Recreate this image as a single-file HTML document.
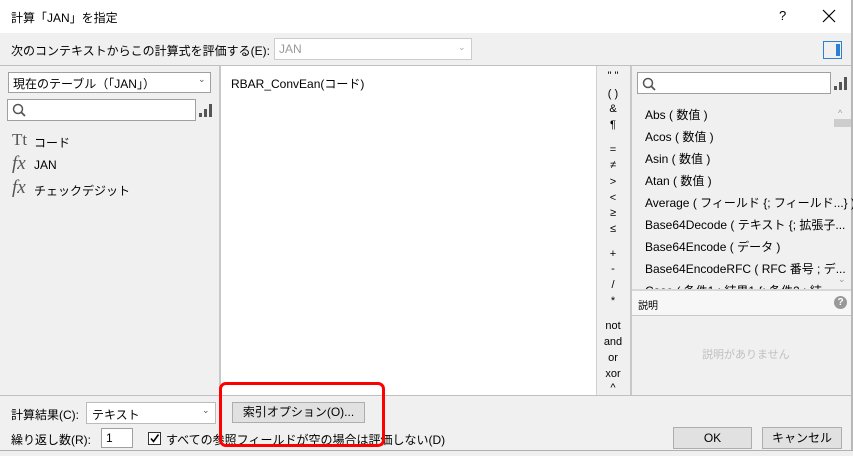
<html><head><style>
body{margin:0;width:853px;height:455px;overflow:hidden;background:#f0f0f0;font-family:"Liberation Sans","Noto Sans CJK JP",sans-serif;font-size:12px;color:#000;position:relative}
.a{position:absolute;white-space:nowrap}
.box{position:absolute;background:#fff;border:1px solid #a0a0a0;box-sizing:border-box}
.btn{position:absolute;background:#e1e1e1;border:1px solid #adadad;box-sizing:border-box;text-align:center;white-space:nowrap}
.op{position:absolute;left:596px;width:34px;text-align:center;font-size:11px}
.fn{position:absolute;left:645px;font-size:12px;white-space:nowrap}
</style></head><body>
<div class="a" style="left:0;top:0;width:851px;height:33px;background:#fff"></div>
<div class="a" style="left:11px;top:9px;font-size:12px">計算「JAN」を指定</div>
<div class="a" style="left:779px;top:8px;font-size:13px">?</div>
<svg class="a" style="left:822px;top:9px" width="14" height="14"><path d="M1 1L13 13M13 1L1 13" stroke="#000" stroke-width="1.2"/></svg>
<div class="a" style="left:851px;top:0;width:2px;height:455px;background:#b8b8b8"></div>
<div class="a" style="left:11px;top:42px">次のコンテキストからこの計算式を評価する(E):</div>
<div class="box" style="left:274px;top:38px;width:198px;height:22px;border-color:#ccc"></div>
<div class="a" style="left:279px;top:42px;color:#999">JAN</div>
<div class="a" style="left:458px;top:42px;color:#aaa;font-size:9px">⌄</div>
<div class="a" style="left:823px;top:41px;width:19px;height:18px;border:1px solid #2b7fd4;box-sizing:border-box"></div>
<div class="a" style="left:836px;top:44px;width:4px;height:12px;background:#2b7fd4"></div>
<div class="a" style="left:0;top:65px;width:851px;height:1px;background:#c0c0c0"></div>
<div class="a" style="left:219px;top:66px;width:2px;height:329px;background:#c8c8c8"></div>
<div class="box" style="left:8px;top:72px;width:203px;height:21px"></div>
<div class="a" style="left:13px;top:75px">現在のテーブル（「JAN」）</div>
<div class="a" style="left:198px;top:74px;font-size:9px;color:#555">⌄</div>
<div class="box" style="left:7px;top:99px;width:189px;height:22px"></div>
<svg class="a" style="left:12px;top:103px" width="14" height="14"><circle cx="6" cy="6" r="4.5" fill="none" stroke="#555" stroke-width="1.5"/><path d="M9.5 9.5L13 13" stroke="#555" stroke-width="1.8"/></svg>
<svg class="a" style="left:199px;top:103px" width="14" height="15"><rect x="0" y="10" width="3" height="4" fill="#555"/><rect x="5" y="6" width="3" height="8" fill="#555"/><rect x="10" y="1" width="3" height="13" fill="#555"/></svg>
<div class="a" style="left:12px;top:130px;font-family:'Liberation Serif',serif;font-size:17px;color:#555">Tt</div>
<div class="a" style="left:34px;top:134px">コード</div>
<div class="a" style="left:12px;top:153px;font-family:'Liberation Serif',serif;font-style:italic;font-size:19px;color:#555">fx</div>
<div class="a" style="left:34px;top:158px">JAN</div>
<div class="a" style="left:12px;top:177px;font-family:'Liberation Serif',serif;font-style:italic;font-size:19px;color:#555">fx</div>
<div class="a" style="left:34px;top:182px">チェックデジット</div>
<div class="a" style="left:221px;top:66px;width:375px;height:329px;background:#fff"></div>
<div class="a" style="left:231px;top:75px">RBAR_ConvEan(コード)</div>
<div class="a" style="left:596px;top:66px;width:1px;height:329px;background:#d0d0d0"></div>
<div class="op" style="top:70px">" "</div>
<div class="op" style="top:88px">( )</div>
<div class="op" style="top:103px">&amp;</div>
<div class="op" style="top:119px">¶</div>
<div class="op" style="top:144px">=</div>
<div class="op" style="top:159px">≠</div>
<div class="op" style="top:176px">&gt;</div>
<div class="op" style="top:192px">&lt;</div>
<div class="op" style="top:207px">≥</div>
<div class="op" style="top:223px">≤</div>
<div class="op" style="top:248px">+</div>
<div class="op" style="top:263px">-</div>
<div class="op" style="top:279px">/</div>
<div class="op" style="top:295px">*</div>
<div class="op" style="top:320px">not</div>
<div class="op" style="top:336px">and</div>
<div class="op" style="top:352px">or</div>
<div class="op" style="top:368px">xor</div>
<div class="op" style="top:382px">^</div>
<div class="a" style="left:630px;top:66px;width:2px;height:329px;background:#c8c8c8"></div>
<div class="box" style="left:637px;top:72px;width:194px;height:22px"></div>
<svg class="a" style="left:642px;top:77px" width="14" height="14"><circle cx="6" cy="6" r="4.5" fill="none" stroke="#555" stroke-width="1.5"/><path d="M9.5 9.5L13 13" stroke="#555" stroke-width="1.8"/></svg>
<svg class="a" style="left:834px;top:76px" width="14" height="15"><rect x="0" y="10" width="3" height="4" fill="#555"/><rect x="5" y="6" width="3" height="8" fill="#555"/><rect x="10" y="1" width="3" height="13" fill="#555"/></svg>
<div class="fn" style="top:106px">Abs ( 数值 )</div>
<div class="fn" style="top:128px">Acos ( 数值 )</div>
<div class="fn" style="top:150px">Asin ( 数值 )</div>
<div class="fn" style="top:172px">Atan ( 数值 )</div>
<div class="fn" style="top:194px">Average ( フィールド {; フィールド...} )</div>
<div class="fn" style="top:216px">Base64Decode ( テキスト {; 拡張子...</div>
<div class="fn" style="top:238px">Base64Encode ( データ )</div>
<div class="fn" style="top:260px">Base64EncodeRFC ( RFC 番号 ; デ...</div>
<div class="a" style="left:645px;top:280px;height:9px;overflow:hidden"><div style="margin-top:2px">Case ( 条件1 ; 結果1 {; 条件2 ; 結...</div></div>
<div class="a" style="left:838px;top:108px;font-size:9px;color:#999">^</div>
<div class="a" style="left:834px;top:119px;width:17px;height:8px;background:#cdcdcd"></div>
<div class="a" style="left:838px;top:274px;font-size:9px;color:#999">⌄</div>
<div class="a" style="left:632px;top:289px;width:219px;height:2px;background:#d8d8d8"></div>
<div class="a" style="left:632px;top:291px;width:219px;height:24px;background:#f7f7f7"></div>
<div class="a" style="left:638px;top:297px;font-size:10px">説明</div>
<div class="a" style="left:834px;top:296px;width:13px;height:13px;border-radius:50%;background:#999;color:#fff;font-size:10px;text-align:center;line-height:13px;font-weight:bold">?</div>
<div class="a" style="left:632px;top:315px;width:219px;height:1px;background:#c8c8c8"></div>
<div class="a" style="left:702px;top:346px;color:#c0c0c0;font-size:11px">説明がありません</div>
<div class="a" style="left:0;top:395px;width:851px;height:1px;background:#c0c0c0"></div>
<div class="a" style="left:11px;top:406px">計算結果(C):</div>
<div class="box" style="left:86px;top:402px;width:130px;height:22px;border-color:#bbb"></div>
<div class="a" style="left:92px;top:406px">テキスト</div>
<div class="a" style="left:202px;top:405px;font-size:9px;color:#555">⌄</div>
<div class="btn" style="left:232px;top:402px;width:133px;height:21px;line-height:19px">索引オプション(O)...</div>
<div class="a" style="left:11px;top:431px">繰り返し数(R):</div>
<div class="box" style="left:101px;top:428px;width:32px;height:20px"></div>
<div class="a" style="left:106px;top:431px">1</div>
<div class="box" style="left:148px;top:432px;width:13px;height:13px;border-color:#333"></div>
<svg class="a" style="left:149px;top:433px" width="11" height="11"><path d="M2 5.5L4.5 8.5L9.5 1.5" fill="none" stroke="#000" stroke-width="1.6"/></svg>
<div class="a" style="left:166px;top:431px">すべての参照フィールドが空の場合は評価しない(D)</div>
<div class="btn" style="left:673px;top:427px;width:79px;height:22px;line-height:20px">OK</div>
<div class="btn" style="left:762px;top:427px;width:80px;height:22px;line-height:20px">キャンセル</div>
<div class="a" style="left:0;top:450px;width:853px;height:5px;background:#f0f0f0;border-top:1px solid #b0b0b0"></div>
<div class="a" style="left:219px;top:382px;width:166px;height:65px;border:3px solid #f00;border-radius:7px;box-sizing:border-box"></div>
</body></html>
